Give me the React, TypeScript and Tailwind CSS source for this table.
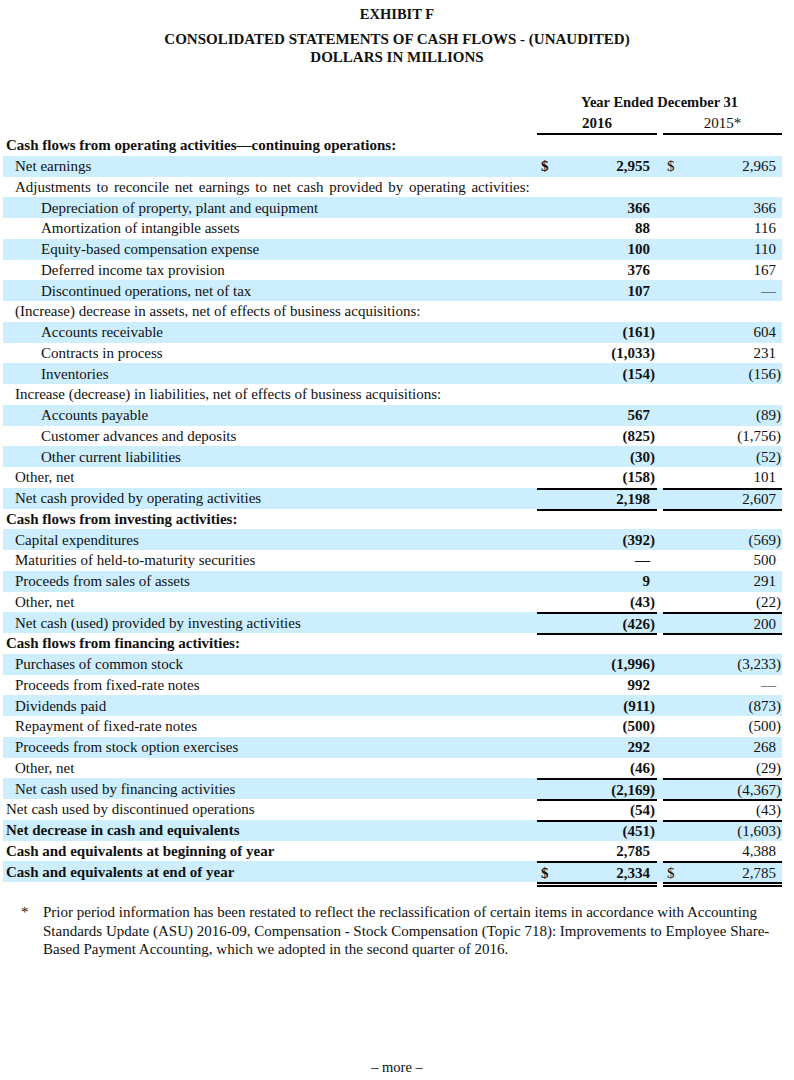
import React from 'react';

type Row = {
  label: string;
  level: 0 | 1 | 2;
  bold?: boolean;
  a?: string;
  b?: string;
  dollar?: boolean;
  line?: boolean;
  wide?: boolean;
};

const rows: Row[] = [
  { label: 'Cash flows from operating activities\u2014continuing operations:', level: 0, bold: true },
  { label: 'Net earnings', level: 1, a: '2,955', b: '2,965', dollar: true },
  { label: 'Adjustments to reconcile net earnings to net cash provided by operating activities:', level: 1, wide: true },
  { label: 'Depreciation of property, plant and equipment', level: 2, a: '366', b: '366' },
  { label: 'Amortization of intangible assets', level: 2, a: '88', b: '116' },
  { label: 'Equity-based compensation expense', level: 2, a: '100', b: '110' },
  { label: 'Deferred income tax provision', level: 2, a: '376', b: '167' },
  { label: 'Discontinued operations, net of tax', level: 2, a: '107', b: '\u2014' },
  { label: '(Increase) decrease in assets, net of effects of business acquisitions:', level: 1 },
  { label: 'Accounts receivable', level: 2, a: '(161)', b: '604' },
  { label: 'Contracts in process', level: 2, a: '(1,033)', b: '231' },
  { label: 'Inventories', level: 2, a: '(154)', b: '(156)' },
  { label: 'Increase (decrease) in liabilities, net of effects of business acquisitions:', level: 1 },
  { label: 'Accounts payable', level: 2, a: '567', b: '(89)' },
  { label: 'Customer advances and deposits', level: 2, a: '(825)', b: '(1,756)' },
  { label: 'Other current liabilities', level: 2, a: '(30)', b: '(52)' },
  { label: 'Other, net', level: 1, a: '(158)', b: '101' },
  { label: 'Net cash provided by operating activities', level: 1, a: '2,198', b: '2,607', line: true },
  { label: 'Cash flows from investing activities:', level: 0, bold: true, line: true },
  { label: 'Capital expenditures', level: 1, a: '(392)', b: '(569)' },
  { label: 'Maturities of held-to-maturity securities', level: 1, a: '\u2014', b: '500' },
  { label: 'Proceeds from sales of assets', level: 1, a: '9', b: '291' },
  { label: 'Other, net', level: 1, a: '(43)', b: '(22)' },
  { label: 'Net cash (used) provided by investing activities', level: 1, a: '(426)', b: '200', line: true },
  { label: 'Cash flows from financing activities:', level: 0, bold: true, line: true },
  { label: 'Purchases of common stock', level: 1, a: '(1,996)', b: '(3,233)' },
  { label: 'Proceeds from fixed-rate notes', level: 1, a: '992', b: '\u2014' },
  { label: 'Dividends paid', level: 1, a: '(911)', b: '(873)' },
  { label: 'Repayment of fixed-rate notes', level: 1, a: '(500)', b: '(500)' },
  { label: 'Proceeds from stock option exercises', level: 1, a: '292', b: '268' },
  { label: 'Other, net', level: 1, a: '(46)', b: '(29)' },
  { label: 'Net cash used by financing activities', level: 1, a: '(2,169)', b: '(4,367)', line: true },
  { label: 'Net cash used by discontinued operations', level: 0, a: '(54)', b: '(43)', line: true },
  { label: 'Net decrease in cash and equivalents', level: 0, bold: true, a: '(451)', b: '(1,603)', line: true },
  { label: 'Cash and equivalents at beginning of year', level: 0, bold: true, a: '2,785', b: '4,388' },
  { label: 'Cash and equivalents at end of year', level: 0, bold: true, a: '2,334', b: '2,785', dollar: true, line: true },
];

const indent = ['pl-[3px]', 'pl-[12px]', 'pl-[38px]'];

function Amount({ value, dollar, bold, line, right }: { value?: string; dollar?: boolean; bold?: boolean; line?: boolean; right: string }) {
  const paren = value?.endsWith(')');
  return (
    <div className={`flex justify-between items-center h-full pl-[4px] ${right} ${line ? 'border-t-2 border-black' : ''} ${bold ? 'font-bold' : ''}`}>
      <span>{dollar ? '$' : ''}</span>
      <span>
        {value}
        {value && !paren && <span className="invisible">)</span>}
      </span>
    </div>
  );
}

export default function App() {
  return (
    <div className="w-[794px] h-[1080px] bg-white text-[#111] font-['Liberation_Serif','Times_New_Roman',serif]">
      <div className="pt-[5px] text-center font-bold leading-[18px]">
        <div className="text-[14.5px]">EXHIBIT F</div>
        <div className="mt-[7px] text-[15px]">CONSOLIDATED STATEMENTS OF CASH FLOWS - (UNAUDITED)</div>
        <div className="text-[15px]">DOLLARS IN MILLIONS</div>
      </div>

      <div className="ml-[3px] w-[779px] text-[15px]">
        <div className="grid grid-cols-[534px_120px_6px_119px] mt-[27px] leading-[18px]">
          <div />
          <div className="col-span-3 text-center font-bold text-[14.5px]">Year Ended December 31</div>
          <div />
          <div className="mt-[3px] text-center font-bold">2016</div>
          <div />
          <div className="mt-[3px] text-center">2015*</div>
          <div />
          <div className="mt-[1px] h-[2px] bg-black" />
          <div />
          <div className="mt-[1px] h-[2px] bg-black" />
        </div>

        {rows.map((r, i) => (
          <div
            key={i}
            className={`grid grid-cols-[534px_120px_6px_119px] h-[20.75px] items-stretch leading-[18px] ${i % 2 === 1 ? 'bg-[#cceeff]' : ''}`}
          >
            <div className={`flex items-center whitespace-nowrap ${indent[r.level]} ${r.bold ? 'font-bold' : ''} ${r.wide ? '[word-spacing:2px]' : ''}`}>{r.label}</div>
            <Amount value={r.a} dollar={r.dollar} bold line={r.line} right="pr-[2px]" />
            <div />
            <Amount value={r.b} dollar={r.dollar} line={r.line} right="pr-[1px]" />
          </div>
        ))}

        <div className="grid grid-cols-[534px_120px_6px_119px]">
          <div />
          <div className="h-[5px] border-t-[5px] border-double border-black" />
          <div />
          <div className="h-[5px] border-t-[5px] border-double border-black" />
        </div>
      </div>

      <div className="mt-[16px] flex text-[15px] leading-[18.5px]">
        <div className="w-[43px] pl-[21px]">*</div>
        <div className="whitespace-nowrap">
          Prior period information has been restated to reflect the reclassification of certain items in accordance with Accounting
          <br />
          Standards Update (ASU) 2016-09, Compensation - Stock Compensation (Topic 718): Improvements to Employee Share-
          <br />
          Based Payment Accounting, which we adopted in the second quarter of 2016.
        </div>
      </div>

      <div className="mt-[99px] text-center text-[14.5px] leading-[18px]">{'\u2013 more \u2013'}</div>
    </div>
  );
}
